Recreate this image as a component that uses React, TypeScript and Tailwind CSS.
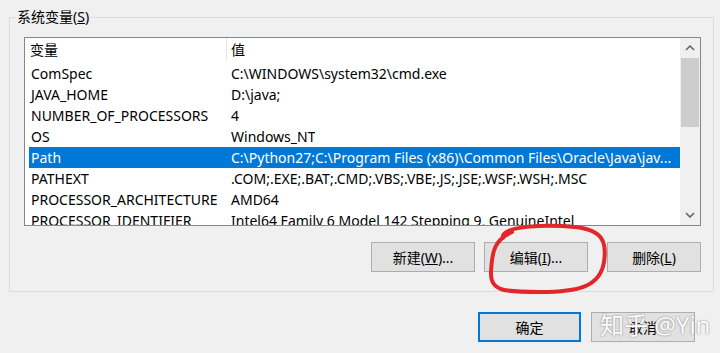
import React from "react";

const rows: [string, string][] = [
  ["ComSpec", "C:\\WINDOWS\\system32\\cmd.exe"],
  ["JAVA_HOME", "D:\\java;"],
  ["NUMBER_OF_PROCESSORS", "4"],
  ["OS", "Windows_NT"],
  ["Path", "C:\\Python27;C:\\Program Files (x86)\\Common Files\\Oracle\\Java\\jav..."],
  ["PATHEXT", ".COM;.EXE;.BAT;.CMD;.VBS;.VBE;.JS;.JSE;.WSF;.WSH;.MSC"],
  ["PROCESSOR_ARCHITECTURE", "AMD64"],
  ["PROCESSOR_IDENTIFIER", "Intel64 Family 6 Model 142 Stepping 9, GenuineIntel"],
];

const font = { fontFamily: '"Noto Sans", "Noto Sans CJK SC", sans-serif' };

export default function App() {
  return (
    <div
      className="relative w-[720px] h-[353px] overflow-hidden bg-[#f0f0f0] text-[14px] text-black"
      style={font}
    >
      <div className="pt-[17px] pl-[9px]">
        <div className="relative w-[705px] h-[275px] border border-[#dcdcdc] pt-[19px] pl-[14px]">
          <div className="absolute -top-[10px] left-[6px] bg-[#f0f0f0] px-[1px] leading-[18px]">
            系统变量(<span className="underline">S</span>)
          </div>
          <div className="flex w-[677px] h-[189px] border border-[#828790] bg-white">
            <div className="w-[655px] overflow-hidden">
              <div className="flex h-[25px] items-center pb-[2px]">
                <div className="w-[202px] h-full pl-[5px] border-r border-[#e5e5e5] flex items-center">变量</div>
                <div className="pl-[4px]">值</div>
              </div>
              {rows.map(([k, v]) => {
                const sel = k === "Path";
                return (
                  <div
                    key={k}
                    className={
                      "flex h-[21px] items-center whitespace-nowrap ml-[4px] " +
                      (sel ? "bg-[#0078d7] text-white" : "")
                    }
                  >
                    <div className="w-[202px] pl-[2px] shrink-0">{k}</div>
                    <div className="overflow-hidden">{v}</div>
                  </div>
                );
              })}
            </div>
            <div className="w-[20px] flex flex-col bg-[#f0f0f0]">
              <div className="h-[20px] flex items-center justify-center">
                <svg width="10" height="6" viewBox="0 0 10 6">
                  <path d="M1 5 L5 1 L9 5" fill="none" stroke="#606060" strokeWidth="1.5" />
                </svg>
              </div>
              <div className="mx-[1px] h-[69px] bg-[#cdcdcd]" />
              <div className="flex-1" />
              <div className="h-[20px] flex items-center justify-center">
                <svg width="10" height="6" viewBox="0 0 10 6">
                  <path d="M1 1 L5 5 L9 1" fill="none" stroke="#606060" strokeWidth="1.5" />
                </svg>
              </div>
            </div>
          </div>
          <div className="flex w-[677px] justify-end mt-[16px]">
            <button className="w-[104px] h-[30px] bg-[#e1e1e1] border border-[#adadad]">
              新建(<span className="underline">W</span>)...
            </button>
            <button className="ml-[9px] w-[104px] h-[30px] bg-[#e1e1e1] border border-[#adadad]">
              编辑(<span className="underline">I</span>)...
            </button>
            <button className="ml-[19px] w-[94px] h-[30px] bg-[#e1e1e1] border border-[#adadad]">
              删除(<span className="underline">L</span>)
            </button>
          </div>
        </div>
      </div>
      <div className="flex pl-[478px] mt-[20px]">
        <button className="w-[103px] h-[30px] bg-[#e1e1e1] border-2 border-[#0078d7]">确定</button>
        <button className="ml-[10px] w-[104px] h-[30px] bg-[#e1e1e1] border border-[#adadad]">取消</button>
      </div>
      <svg className="absolute left-0 top-0" width="720" height="353" viewBox="0 0 720 353">
        <path
          d="M503 238 C 500 226, 545 224, 575 227 C 603 230, 607 242, 604 262 C 600 287, 578 292, 540 292 C 506 292, 490 292, 491 272 C 492 252, 494 240, 512 232"
          fill="none"
          stroke="#e4262b"
          strokeWidth="4"
          strokeLinecap="round"
        />
      </svg>
      <div
        className="absolute left-[600px] top-[307px] text-[24px] text-white whitespace-nowrap"
        style={{ textShadow: "0 0 1px #888, 0 0 2px #999" }}
      >
        知乎 @Yin
      </div>
    </div>
  );
}
